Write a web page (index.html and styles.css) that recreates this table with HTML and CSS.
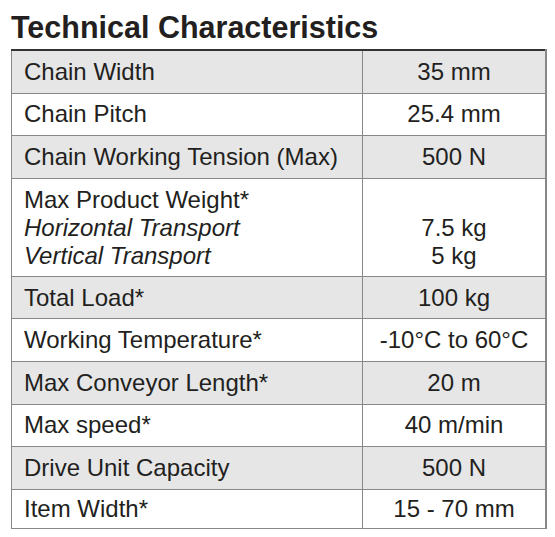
FILE: index.html
```html
<!DOCTYPE html>
<html lang="en">
<head>
  <meta charset="UTF-8">
  <title>Technical Characteristics</title>
  <link rel="stylesheet" href="styles.css">
</head>
<body>
  <h1>Technical Characteristics</h1>
  <table class="specs">
    <tr class="shade"><td>Chain Width</td><td class="val">35 mm</td></tr>
    <tr><td>Chain Pitch</td><td class="val">25.4 mm</td></tr>
    <tr class="shade"><td>Chain Working Tension (Max)</td><td class="val">500 N</td></tr>
    <tr class="tall">
      <td>Max Product Weight*<br><em>Horizontal Transport</em><br><em>Vertical Transport</em></td>
      <td class="val bottom">7.5 kg<br>5 kg</td>
    </tr>
    <tr class="shade"><td>Total Load*</td><td class="val">100 kg</td></tr>
    <tr><td>Working Temperature*</td><td class="val">-10°C to 60°C</td></tr>
    <tr class="shade"><td>Max Conveyor Length*</td><td class="val">20 m</td></tr>
    <tr><td>Max speed*</td><td class="val">40 m/min</td></tr>
    <tr class="shade"><td>Drive Unit Capacity</td><td class="val">500 N</td></tr>
    <tr class="last"><td>Item Width*</td><td class="val">15 - 70 mm</td></tr>
  </table>
</body>
</html>
```

FILE: styles.css
```css
body {
  margin: 0;
  padding: 10px 8px 0 11px;
  font-family: "Liberation Sans", Arial, sans-serif;
  color: #231f20;
  background: #fff;
}

h1 {
  margin: 0 0 5px 0;
  font-size: 30.5px;
  font-weight: bold;
  line-height: 34px;
}

.specs {
  width: 536px;
  border-collapse: collapse;
  font-size: 24px;
  line-height: 28px;
  border-top: 2px solid #333;
  border-right: 2px solid #888;
}

.specs td {
  border: 1px solid #888;
  padding: 0 12px;
  height: 41.6px;
  vertical-align: middle;
}

.specs td:first-child {
  width: 326px;
}

.specs .val {
  text-align: center;
}

.specs tr.tall td {
  padding: 7px 12px 6px 12px;
}

.specs tr.last td {
  height: 38px;
  padding-top: 0;
  padding-bottom: 0;
  line-height: 26px;
}

.specs .bottom {
  vertical-align: bottom;
}

.shade td {
  background: #e6e6e7;
}

em {
  font-style: italic;
}
```
